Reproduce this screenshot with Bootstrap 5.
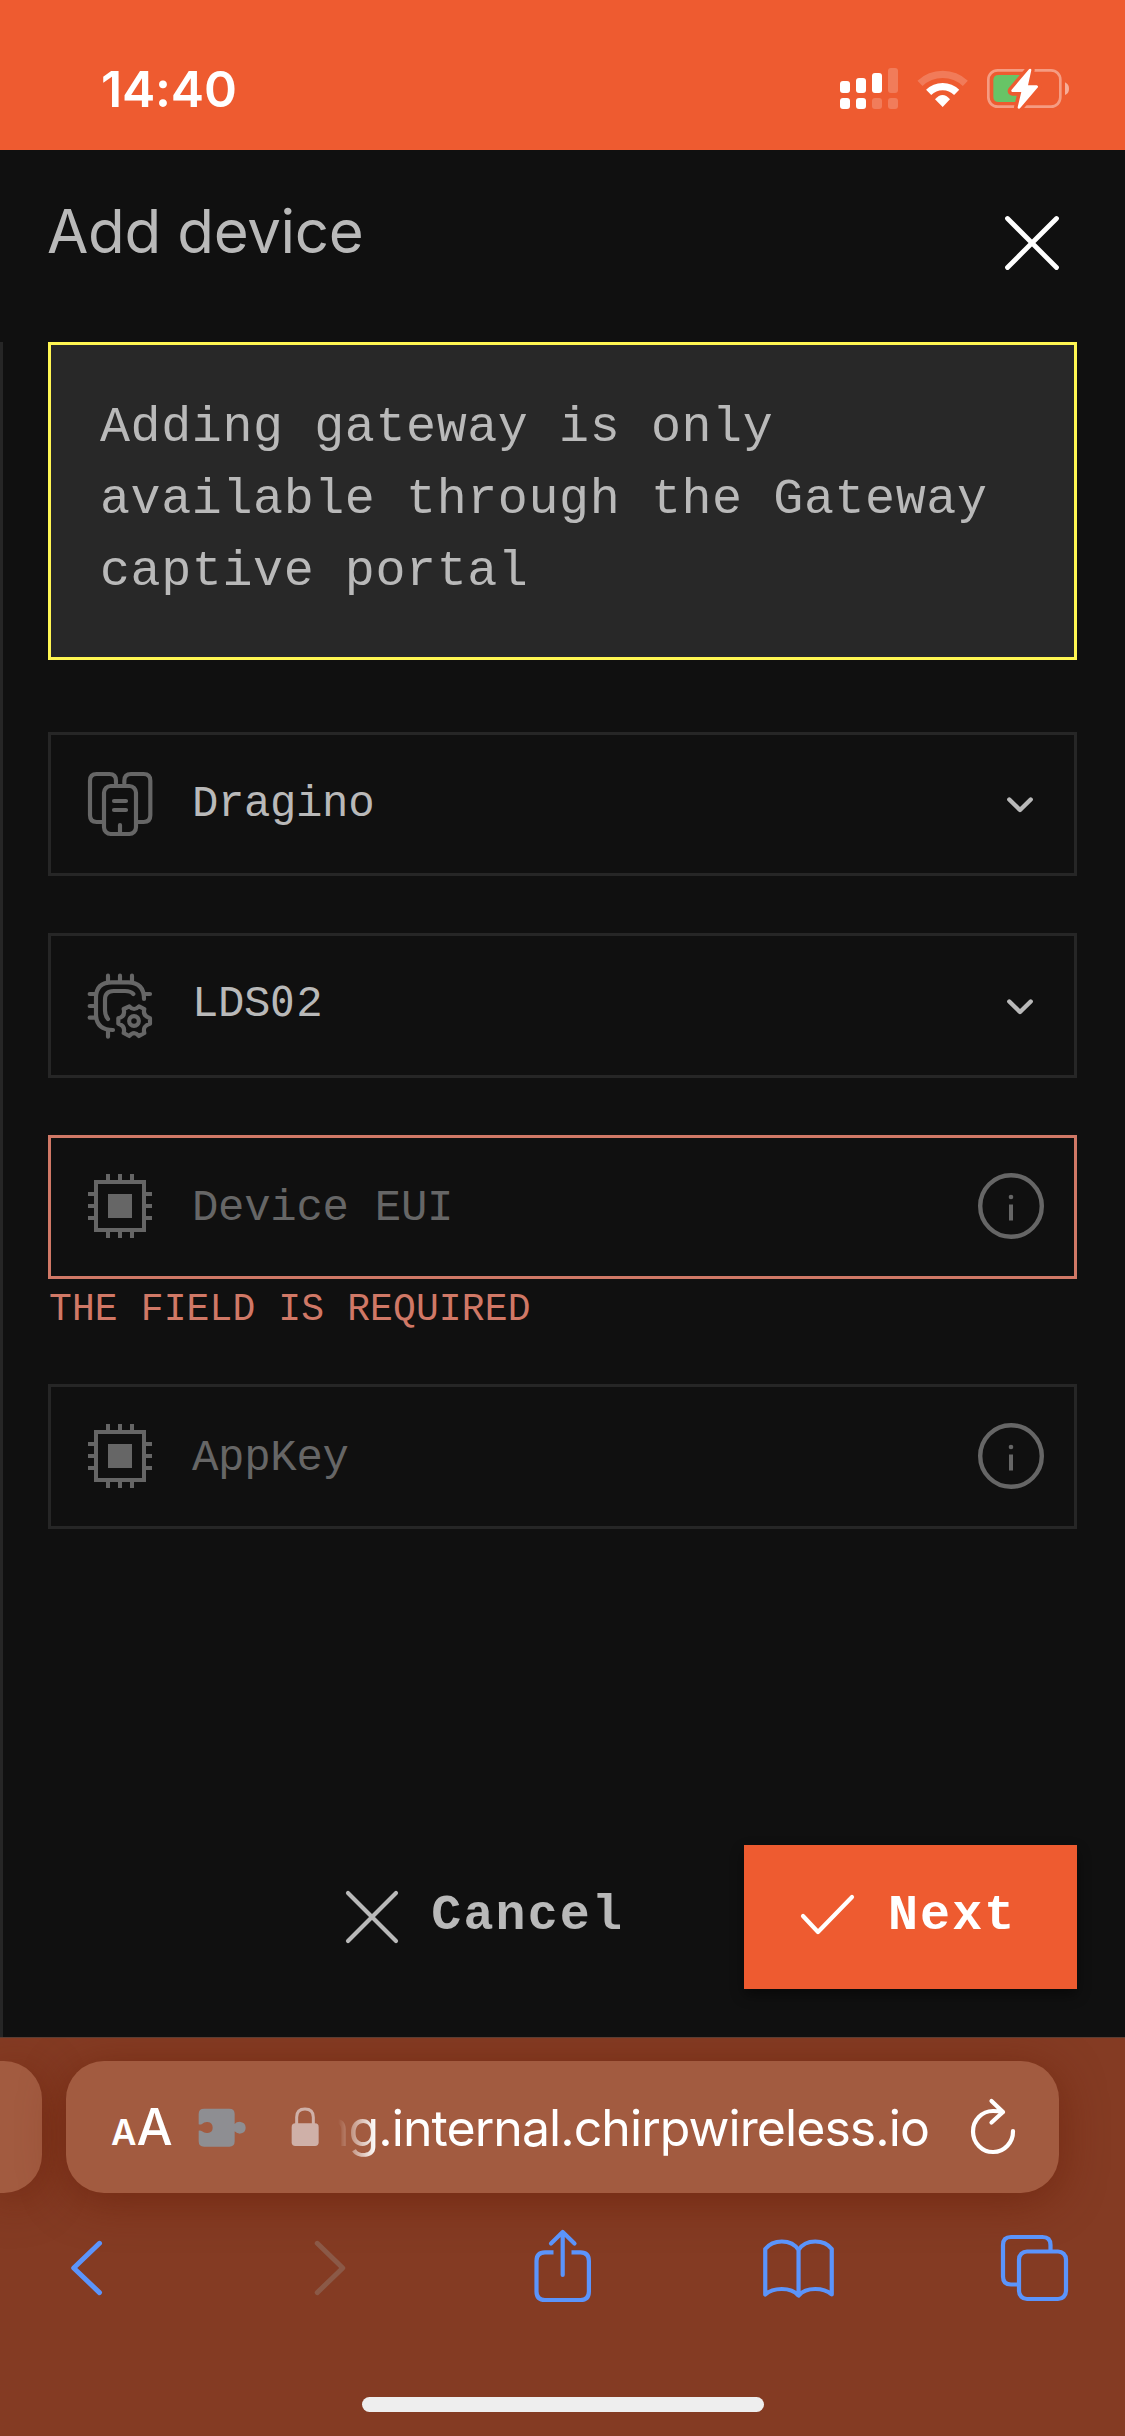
<!DOCTYPE html>
<html lang="en">
<head>
<meta charset="utf-8">
<meta name="viewport" content="width=device-width, initial-scale=1">
<title>Add device</title>
<link href="https://cdn.jsdelivr.net/npm/bootstrap@5.3.0/dist/css/bootstrap.min.css" rel="stylesheet">
<style>
  body { width: 1125px; height: 2436px; background: #101010; color: #b9b9b9; font-family: Inter, "Liberation Sans", sans-serif; overflow: hidden; }
  svg { display: block; flex: none; overflow: visible; }
  .status { height: 150px; background: #ee5b30; color: #fff; padding: 65px 55px 0 101px; }
  .clock { font-size: 50px; font-weight: 600; line-height: 48px; letter-spacing: -.2px; }
  .sheet { height: 1887px; padding: 0 48px 48px; background: linear-gradient(#262626, #262626) 0 192px / 3px 100% no-repeat; }
  .sheet-head { height: 192px; padding: 48px 16px 0 0; }
  .sheet-title { font-size: 60px; font-weight: 400; line-height: 66px; letter-spacing: -.35px; text-indent: -1px; }
  .mono { font-family: "Liberation Mono", monospace; }
  .notice { height: 318px; border: 3px solid #fff652; background: #282828; padding: 47px 49px 40px; font-size: 50px; line-height: 72px; letter-spacing: .6px; margin-bottom: 72px; }
  .field { height: 144px; border: 3px solid #262626; padding: 0 30px 0 35px; margin-bottom: 57px; font-size: 44px; line-height: 60px; letter-spacing: -.38px; }
  .field.tall { height: 145px; }
  .field .value { padding: 0 0 0 38px; }
  .field .value.digits { padding-bottom: 3px; }
  .field.empty { color: #666; padding-bottom: 2px; letter-spacing: -.28px; }
  .field.empty .value { padding-top: 4px; }
  .field.invalid { border-color: #d07866; margin-bottom: 0; }
  .error { color: #d07866; font-size: 38px; line-height: 48px; letter-spacing: .13px; height: 105px; padding: 7px 0 0 1px; }
  .chev { margin: 2px 11px 0 0; }
  .zero { font-family: "DejaVu Sans Mono", monospace; font-size: 41px; line-height: 1; letter-spacing: 1.4px; }
  .act { height: 144px; border: 0; border-radius: 0; font-size: 50px; font-weight: 700; letter-spacing: 2.1px; line-height: 60px; padding: 0; }
  .act .cap { margin-top: -2px; }
  .act-cancel { color: #b9b9b9; margin-right: 120px; }
  .act-next { width: 333px; background: #ee5b30; color: #fff; padding-left: 56px; box-shadow: 0 6px 12px rgba(0,0,0,.45); }
  .safari { height: 399px; background: #843b23; border-top: 1px solid #5a3d33; overflow: hidden; }
  .tabs-row { height: 156px; padding-top: 23px; gap: 24px; }
  .pill { height: 132px; background: #a25b40; border-radius: 38px; box-shadow: 0 8px 44px rgba(100,28,6,.55); color: #fff; }
  .pill-prev { width: 42px; border-radius: 0 38px 38px 0; }
  .pill-main { width: 993px; padding: 0 43px 0 45px; }
  .aa-small { font-size: 35px; font-weight: 600; } .aa-big { font-size: 51px; }
  .aa { width: 60px; line-height: 60px; font-weight: 500; padding-top: 11px; }
  .puzzle { margin: 2px 0 0 27px; }
  .lock { margin-left: 45px; }
  .url { width: 612px; margin-left: 1px; padding: 2px 6px 0 0; font-size: 50px; line-height: 66px; letter-spacing: -.94px; white-space: nowrap; text-align: right; -webkit-mask-image: linear-gradient(90deg, transparent 18px, #000 56px); mask-image: linear-gradient(90deg, transparent 18px, #000 56px); }
  .tools { padding: 32px 50px 0; }
  .home { width: 402px; height: 15px; border-radius: 8px; background: #eee; margin: 91px auto 0; }
</style>
</head>
<body>
<header class="status d-flex justify-content-between align-items-start">
  <div class="clock">14:40</div>
  <svg width="233" height="47" viewBox="111 75 699 141" fill="#fff">
    <g>
      <rect x="120" y="123" width="30" height="36" rx="9"/><rect x="168" y="114" width="30" height="45" rx="9"/><rect x="216" y="99" width="30" height="60" rx="9"/>
      <rect x="120" y="174" width="30" height="33" rx="9"/><rect x="168" y="174" width="30" height="33" rx="9"/>
      <g opacity=".2"><rect x="264" y="84" width="30" height="75" rx="9"/><rect x="216" y="174" width="30" height="33" rx="9"/><rect x="264" y="174" width="30" height="33" rx="9"/></g>
    </g>
    <g fill="none" stroke="#fff">
      <path d="M360 130A99 99 0 0 1 496 130" stroke-width="22" opacity=".2"/>
      <path d="M386 157A60 60 0 0 1 470 157" stroke-width="22"/>
    </g>
    <path d="M428 201L405 178Q428 152 450 178Z"/>
    <rect x="565" y="91" width="216" height="109" rx="28" fill="none" stroke="#fff" stroke-opacity=".4" stroke-width="8"/>
    <path d="M795 127Q807 133 807 146Q807 160 795 165Z" opacity=".5"/>
    <path d="M596 105H665V186H596Q580 186 580 170V121Q580 105 596 105Z" fill="#68c466"/>
    <path d="M690 90L637 153H668L656 202L710 139H679Z" fill="#ee5b30" stroke="#ee5b30" stroke-width="28" stroke-linejoin="round"/>
    <path d="M690 90L638 152H669L657 202L710 140H679Z" stroke="#fff" stroke-width="8" stroke-linejoin="round"/>
  </svg>
</header>

<main class="sheet d-flex flex-column">
  <div class="sheet-head d-flex justify-content-between align-items-start">
    <h1 class="sheet-title m-0">Add device</h1>
    <svg class="mt-3" width="58" height="58" viewBox="1003 214 58 58" stroke="#fff" stroke-width="4.8" stroke-linecap="round"><path d="M1007.5 218.5L1056.5 267.5M1056.5 218.5L1007.5 267.5"/></svg>
  </div>

  <div class="notice mono">Adding gateway is only<br>available through the Gateway<br>captive portal</div>

  <div class="field mono d-flex align-items-center">
    <svg width="68" height="68" viewBox="168 150 204 204" fill="none" stroke="#666" stroke-width="12.5" stroke-linecap="round" stroke-linejoin="round">
      <path d="M258 190V182Q258 162 238 162H200Q180 162 180 182V286Q180 306 200 306H218M283 190V182Q283 162 303 162H341Q361 162 361 182V286Q361 306 341 306H322"/>
      <rect x="222" y="198" width="96" height="144" rx="20"/><path d="M252 243H288M252 270H288M270 315V340"/>
    </svg>
    <span class="value flex-grow-1">Dragino</span>
    <svg class="chev" width="26" height="20" viewBox="1007 796 26 20" fill="none" stroke="#b9b9b9" stroke-width="4.4" stroke-linecap="round" stroke-linejoin="round"><path d="M1009.3 800.5L1020 811L1030.7 800.5"/></svg>
  </div>

  <div class="field tall mono d-flex align-items-center">
    <svg width="68" height="68" viewBox="168 753 204 204" fill="none" stroke="#666" stroke-width="12.5" stroke-linecap="round" stroke-linejoin="round">
      <path d="M249 927Q198 927 198 879V830Q198 784 246 784H294Q342 784 342 834"/>
      <path d="M234 894Q225 885 225 868V836Q225 810 251 810H285Q302 810 310 819"/>
      <path d="M234 764V782M270 764V782M306 764V782M179 819H196M179 855H196M179 890H196M234 930V947M345 819H360"/>
      <path d="M298 856Q312 872 327 856L343 864Q337 884 360 892V908Q337 914 343 936L327 945Q312 928 298 945L281 936Q287 914 265 908V892Q287 886 281 864Z"/>
      <circle cx="312" cy="900" r="14.5"/>
    </svg>
    <span class="value digits flex-grow-1">LDS<span class="zero">0</span>2</span>
    <svg class="chev" width="26" height="20" viewBox="1007 796 26 20" fill="none" stroke="#b9b9b9" stroke-width="4.4" stroke-linecap="round" stroke-linejoin="round"><path d="M1009.3 800.5L1020 811L1030.7 800.5"/></svg>
  </div>

  <div class="field empty invalid mono d-flex align-items-center">
    <svg width="68" height="68" viewBox="0 0 68 68" fill="none" stroke="#666" stroke-width="4"><rect x="10" y="10" width="48" height="48"/><rect x="22" y="22" width="24" height="24" fill="#666" stroke="none"/><path d="M22 2V9M34 2V9M46 2V9M22 59V66M34 59V66M46 59V66M2 22H9M2 34H9M2 46H9M59 22H66M59 34H66M59 46H66"/></svg>
    <span class="value flex-grow-1">Device EUI</span>
    <svg width="66" height="66" viewBox="0 0 66 66" fill="none" stroke="#666" stroke-width="4.4"><circle cx="33" cy="33" r="30.8"/><path d="M33 31.5V47.5" stroke-width="4"/><circle cx="33" cy="24" r="2.3" fill="#666" stroke="none"/></svg>
  </div>
  <div class="error mono">THE FIELD IS REQUIRED</div>

  <div class="field tall empty mono d-flex align-items-center">
    <svg width="68" height="68" viewBox="0 0 68 68" fill="none" stroke="#666" stroke-width="4"><rect x="10" y="10" width="48" height="48"/><rect x="22" y="22" width="24" height="24" fill="#666" stroke="none"/><path d="M22 2V9M34 2V9M46 2V9M22 59V66M34 59V66M46 59V66M2 22H9M2 34H9M2 46H9M59 22H66M59 34H66M59 46H66"/></svg>
    <span class="value flex-grow-1">AppKey</span>
    <svg width="66" height="66" viewBox="0 0 66 66" fill="none" stroke="#666" stroke-width="4.4"><circle cx="33" cy="33" r="30.8"/><path d="M33 31.5V47.5" stroke-width="4"/><circle cx="33" cy="24" r="2.3" fill="#666" stroke="none"/></svg>
  </div>

  <div class="d-flex justify-content-end mt-auto">
    <button class="btn act act-cancel mono d-flex align-items-center">
      <svg width="54" height="54" viewBox="0 0 54 54" stroke="#b9b9b9" stroke-width="4.2" stroke-linecap="round"><path d="M3 3L51 51M51 3L3 51"/></svg>
      <span class="cap ps-4 ms-2">Cancel</span>
    </button>
    <button class="btn act act-next mono d-flex align-items-center">
      <svg width="56" height="56" viewBox="0 0 56 56" fill="none" stroke="#fff" stroke-width="4.2" stroke-linecap="round" stroke-linejoin="round"><path d="M3 27L18 43L52 8"/></svg>
      <span class="cap ps-4 ms-2">Next</span>
    </button>
  </div>
</main>

<footer class="safari">
  <div class="tabs-row d-flex">
    <div class="pill pill-prev"></div>
    <div class="pill pill-main d-flex align-items-center">
      <div class="aa text-nowrap"><span class="aa-small">A</span><span class="aa-big">A</span></div>
      <svg class="puzzle" width="48" height="40" viewBox="592 235 144 120" fill="#8e8e92"><path d="M610 237H686Q702 237 702 253V283Q707 276 717 276Q735 278 735 294Q735 310 717 312Q707 311 702 305V335Q702 351 686 351H610Q594 351 594 335V303Q599 301 604 305Q611 311 621 310Q636 308 636 294Q636 279 621 277Q611 276 604 283Q599 286 594 284V253Q594 237 610 237Z"/></svg>
      <svg class="lock" width="28" height="40" viewBox="874 231 84 120"><path d="M891 282V262Q891 237 916 237Q941 237 941 262V282" fill="none" stroke="#cfb0a8" stroke-width="9"/><rect x="876" y="280" width="81" height="68" rx="11" fill="#cfb0a8"/></svg>
      <div class="url flex-shrink-0">ng.internal.chirpwireless.io</div>
      <svg class="ms-auto" width="46" height="56" viewBox="970 2098 46 56" fill="none" stroke="#fff" stroke-width="4.2" stroke-linecap="round" stroke-linejoin="round"><path d="M1013 2130A20 20.5 0 1 1 993 2110Q998 2110 1003 2111M991.5 2100L1003 2111L991.5 2121.5"/></svg>
    </div>
  </div>
  <div class="tools d-flex justify-content-between">
    <svg width="80" height="80" viewBox="50 2226 80 80" fill="none" stroke="#5b94fb" stroke-width="5" stroke-linecap="round" stroke-linejoin="round"><path d="M99.5 2243.3L73.7 2268L99.5 2292.6"/></svg>
    <svg width="80" height="80" viewBox="286.25 2226 80 80" fill="none" stroke="#8b5947" stroke-width="5" stroke-linecap="round" stroke-linejoin="round"><path d="M317.5 2243.3L343 2268L317.5 2292.6"/></svg>
    <svg width="80" height="80" viewBox="522.5 2226 80 80" fill="none" stroke="#5b94fb" stroke-width="4.2" stroke-linecap="round" stroke-linejoin="round"><path d="M553 2252.4H544.5Q536 2252.4 536 2261V2291.5Q536 2300 544.5 2300H580Q588.4 2300 588.4 2291.5V2261Q588.4 2252.4 580 2252.4H571" stroke-linecap="butt"/><path d="M562.2 2275V2233M550.5 2243.5L562.2 2232L574 2243.5"/></svg>
    <svg width="80" height="80" viewBox="758.75 2226 80 80" fill="none" stroke="#5b94fb" stroke-width="4.2" stroke-linecap="round" stroke-linejoin="round"><path d="M765 2249Q771 2241.500 781.500 2241.500Q793 2241.500 798.300 2250Q803.500 2241.500 815 2241.500Q826 2241.500 831.500 2249V2294.500Q825 2289 815 2289Q804 2289 798.300 2295.500Q792.500 2289 781.500 2289Q771 2289 765 2294.500ZM798.300 2250V2295.500"/></svg>
    <svg width="80" height="80" viewBox="995 2226 80 80" fill="none" stroke="#5b94fb" stroke-width="4.2" stroke-linejoin="round"><path d="M1050.500 2250V2245Q1050.500 2237 1042.500 2237H1011Q1003 2237 1003 2245V2276.500Q1003 2284.500 1011 2284.500H1018"/><rect x="1019" y="2251.500" width="47" height="47.500" rx="8"/></svg>
  </div>
  <div class="home"></div>
</footer>
<script src="https://cdn.jsdelivr.net/npm/bootstrap@5.3.0/dist/js/bootstrap.bundle.min.js"></script>
</body>
</html>
